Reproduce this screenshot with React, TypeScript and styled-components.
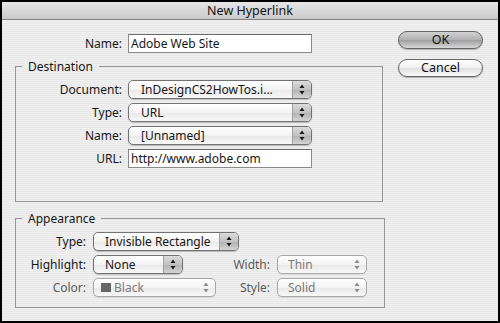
import React from "react";
import styled, { createGlobalStyle, css } from "styled-components";

const GlobalStyle = createGlobalStyle`
  html, body {
    margin: 0;
    padding: 0;
  }
  body {
    width: 500px;
    height: 323px;
    overflow: hidden;
    font-family: "Noto Sans", "DejaVu Sans", sans-serif;
    font-size: 12px;
    color: #161616;
  }
`;

const Window = styled.div`
  width: 500px;
  height: 323px;
  box-sizing: border-box;
  border: 2px solid #000;
  display: flex;
  flex-direction: column;
`;

const TitleBar = styled.div`
  height: 17px;
  line-height: 17px;
  text-align: center;
  font-size: 12.5px;
  color: #111;
  background: linear-gradient(#e6e6e6, #cbcbcb);
  border-bottom: 1px solid #808080;
`;

const Body = styled.div`
  flex: 1;
  display: flex;
  padding: 11px 0 0 13px;
  background: repeating-linear-gradient(#f0f0f0 0 1px, #e8e8e8 1px 2px);
`;

const LeftColumn = styled.div`
  width: 370px;
  padding-top: 3px;
  display: flex;
  flex-direction: column;
  align-items: flex-start;
`;

const ButtonColumn = styled.div`
  margin-left: 13px;
  display: flex;
  flex-direction: column;
  gap: 10px;
`;

const PushButton = styled.button<{ $default?: boolean }>`
  width: 85px;
  height: 18px;
  padding: 0;
  border-radius: 9px;
  border: 1px solid #666;
  font-family: inherit;
  font-size: 12.5px;
  line-height: 16px;
  color: #111;
  box-shadow: 0 1px 1px rgba(0, 0, 0, 0.25);
  background: ${({ $default }) =>
    $default
      ? "linear-gradient(#d2d2d2, #b0b0b0 48%, #9e9e9e 52%, #d8d8d8)"
      : "linear-gradient(#ffffff, #f0f0f0 48%, #e0e0e0 52%, #fafafa)"};
`;

const NameRow = styled.div`
  display: grid;
  grid-template-columns: 107px 184px;
  column-gap: 6px;
  align-items: center;
  height: 19px;
`;

const Label = styled.span<{ $disabled?: boolean }>`
  justify-self: end;
  white-space: nowrap;
  color: ${({ $disabled }) => ($disabled ? "#5a5a5a" : "#161616")};
`;

const TextField = styled.div<{ $width: number }>`
  box-sizing: border-box;
  width: ${({ $width }) => $width}px;
  height: 19px;
  line-height: 17px;
  padding-left: 2px;
  background: #fff;
  border: 1px solid #8a8a8a;
  border-top-color: #6a6a6a;
  white-space: nowrap;
`;

const Group = styled.fieldset<{ $width: number; $top: number; $bottom: number }>`
  box-sizing: border-box;
  width: ${({ $width }) => $width}px;
  margin: ${({ $top }) => $top}px 0 0 0;
  padding: 6px 0 ${({ $bottom }) => $bottom}px 0;
  border: 1px solid #959595;
  min-width: 0;
`;

const Legend = styled.legend`
  margin-left: 6px;
  padding: 0 6px;
  line-height: 15px;
  font-size: 12px;
`;

const DestinationGrid = styled.div`
  display: grid;
  grid-template-columns: 106px 184px;
  grid-auto-rows: 19px;
  column-gap: 6px;
  row-gap: 4px;
  align-items: center;
`;

const AppearanceGrid = styled.div`
  display: grid;
  grid-template-columns: 70px 130px 40px 90px;
  grid-auto-rows: 19px;
  column-gap: 7px;
  row-gap: 4px;
  align-items: center;
`;

const Popup = styled.div<{ $width: number; $disabled?: boolean; $span?: boolean }>`
  box-sizing: border-box;
  width: ${({ $width }) => $width}px;
  height: 19px;
  display: flex;
  align-items: stretch;
  border-radius: 5px;
  border: 1px solid ${({ $disabled }) => ($disabled ? "#a8a8a8" : "#727272")};
  background: linear-gradient(#ffffff, #f3f3f3 50%, #e9e9e9 52%, #f8f8f8);
  box-shadow: 0 1px 1px rgba(0, 0, 0, ${({ $disabled }) => ($disabled ? 0.08 : 0.2)});
  overflow: hidden;
  ${({ $span }) =>
    $span &&
    css`
      grid-column: 2 / 5;
    `}
`;

const PopupText = styled.span<{ $pad: number; $disabled?: boolean }>`
  flex: 1;
  display: flex;
  align-items: center;
  padding-left: ${({ $pad }) => $pad}px;
  line-height: 17px;
  white-space: nowrap;
  color: ${({ $disabled }) => ($disabled ? "#7a7a7a" : "#161616")};
`;

const ArrowBox = styled.span<{ $disabled?: boolean }>`
  width: 18px;
  display: flex;
  align-items: center;
  justify-content: center;
  ${({ $disabled }) =>
    !$disabled &&
    css`
      border-left: 1px solid #a0a0a0;
      background: linear-gradient(#dcdcdc, #c2c2c2 50%, #b2b2b2 52%, #d4d4d4);
    `}
`;

const Swatch = styled.span`
  width: 10px;
  height: 9px;
  margin-right: 3px;
  background: #666;
`;

const Arrows = ({ disabled }: { disabled?: boolean }) => (
  <svg width="6" height="11" viewBox="0 0 6 11">
    <g fill={disabled ? "#8a8a8a" : "#1a1a1a"}>
      <polygon points="3,0.5 5.5,4 0.5,4" />
      <polygon points="0.5,7 5.5,7 3,10.5" />
    </g>
  </svg>
);

interface PopupMenuProps {
  width: number;
  value: string;
  pad?: number;
  disabled?: boolean;
  span?: boolean;
  swatch?: boolean;
}

const PopupMenu = ({ width, value, pad = 11, disabled, span, swatch }: PopupMenuProps) => (
  <Popup $width={width} $disabled={disabled} $span={span}>
    <PopupText $pad={pad} $disabled={disabled}>
      {swatch && <Swatch />}
      {value}
    </PopupText>
    <ArrowBox $disabled={disabled}>
      <Arrows disabled={disabled} />
    </ArrowBox>
  </Popup>
);

const App = () => {
  return (
    <>
      <GlobalStyle />
      <Window>
        <TitleBar>New Hyperlink</TitleBar>
        <Body>
          <LeftColumn>
            <NameRow>
              <Label>Name:</Label>
              <TextField $width={184}>Adobe Web Site</TextField>
            </NameRow>

            <Group $width={368} $top={6} $bottom={33}>
              <Legend>Destination</Legend>
              <DestinationGrid>
                <Label>Document:</Label>
                <PopupMenu width={184} pad={12} value="InDesignCS2HowTos.i..." />
                <Label>Type:</Label>
                <PopupMenu width={184} pad={12} value="URL" />
                <Label>Name:</Label>
                <PopupMenu width={184} pad={12} value="[Unnamed]" />
                <Label>URL:</Label>
                <TextField $width={184}>http://www.adobe.com</TextField>
              </DestinationGrid>
            </Group>

            <Group $width={370} $top={9} $bottom={10}>
              <Legend>Appearance</Legend>
              <AppearanceGrid>
                <Label>Type:</Label>
                <PopupMenu width={146} pad={11} value="Invisible Rectangle" span />
                <Label>Highlight:</Label>
                <PopupMenu width={90} pad={11} value="None" />
                <Label $disabled>Width:</Label>
                <PopupMenu width={90} pad={10} value="Thin" disabled />
                <Label $disabled>Color:</Label>
                <PopupMenu width={123} pad={7} value="Black" disabled swatch />
                <Label $disabled>Style:</Label>
                <PopupMenu width={90} pad={10} value="Solid" disabled />
              </AppearanceGrid>
            </Group>
          </LeftColumn>

          <ButtonColumn>
            <PushButton $default>OK</PushButton>
            <PushButton>Cancel</PushButton>
          </ButtonColumn>
        </Body>
      </Window>
    </>
  );
};

export default App;
